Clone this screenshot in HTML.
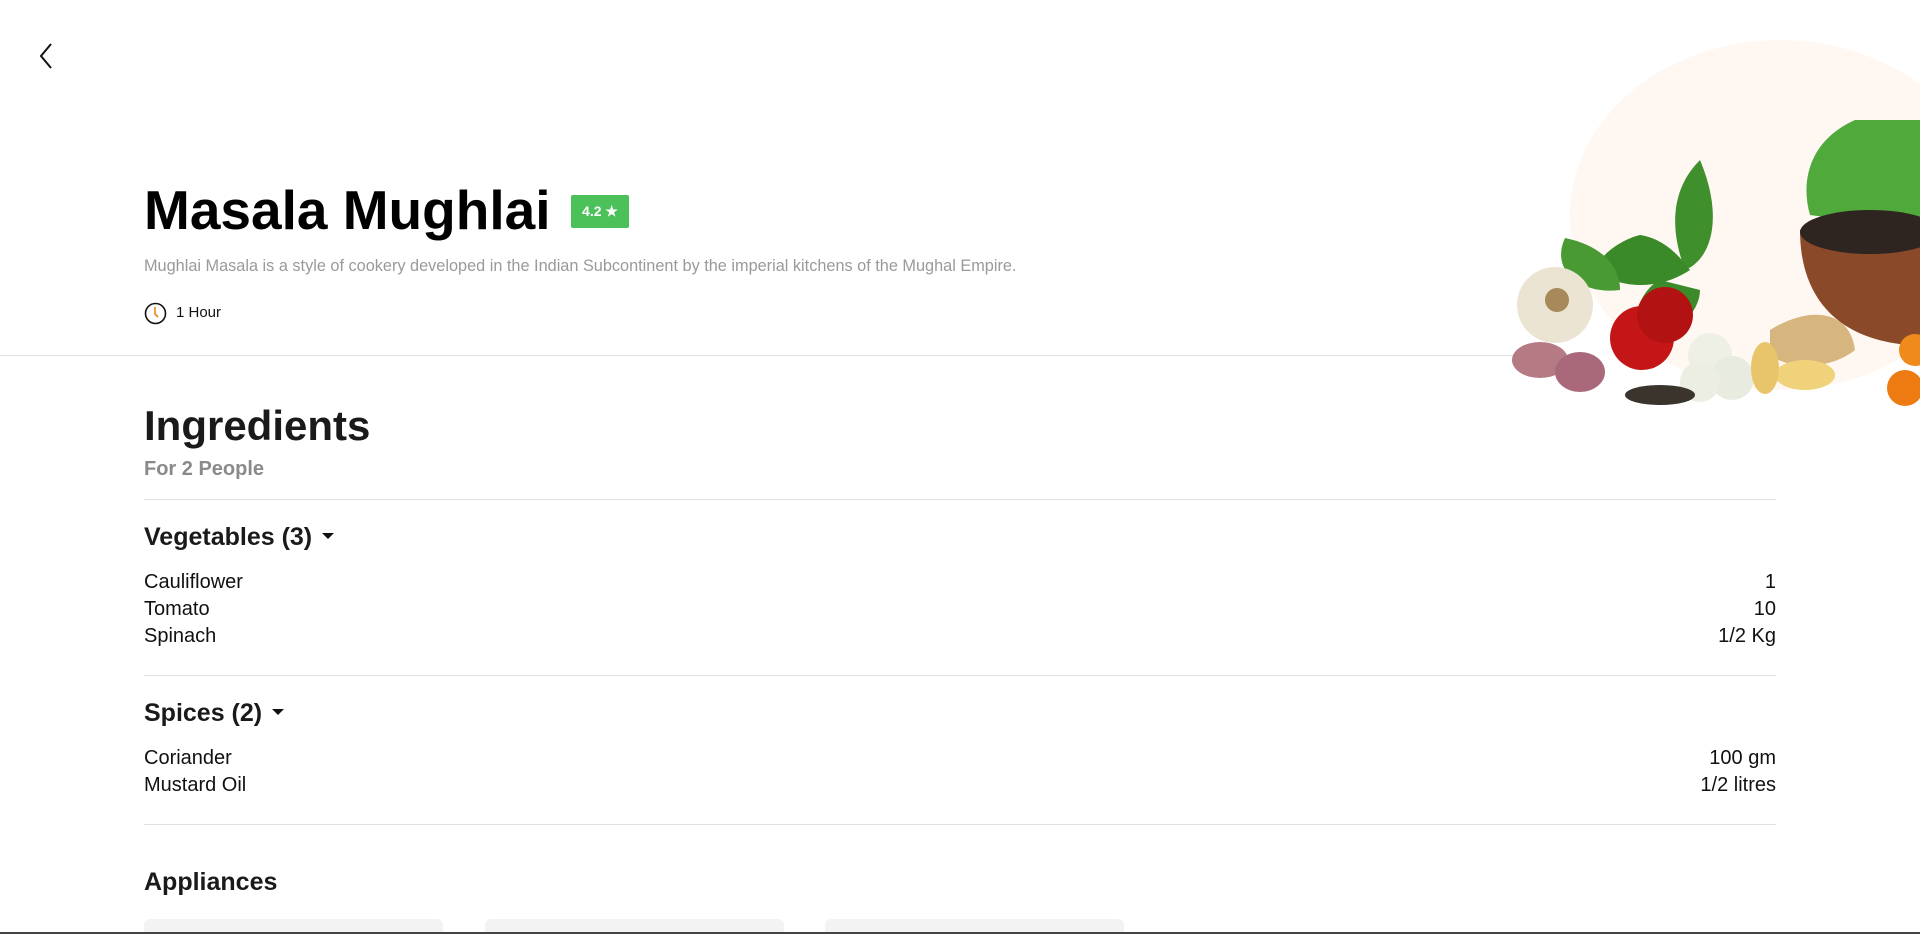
<!DOCTYPE html>
<html><head><meta charset="utf-8"><style>
*{margin:0;padding:0;box-sizing:border-box}
html,body{width:1920px;height:934px;overflow:hidden;background:#fff;font-family:"Liberation Sans",sans-serif;color:#111}
.abs{position:absolute}
h1{position:absolute;left:144px;top:178px;font-size:55px;font-weight:bold;color:#000}
.badge{left:571px;top:195px;width:58px;height:33px;background:#4cc15a;border-radius:2px;color:#fff;font-size:14px;font-weight:bold;text-align:center;line-height:33px}
.desc{left:144px;top:257px;font-size:16.3px;color:#9a9a9a}
.time{left:176px;top:304px;font-size:15px;color:#111}
.hr{height:1px;background:#e2e2e2}
.h2{left:144px;top:402px;font-size:42px;font-weight:bold;color:#1a1a1a}
.sub{left:144px;top:458px;font-size:20px;font-weight:bold;color:#8a8a8a}
.h3{left:144px;font-size:25px;font-weight:bold;color:#1a1a1a}
.row{left:144px;width:1632px;font-size:20px;display:flex;justify-content:space-between;color:#111}
.card{top:919px;width:299px;height:15px;background:#f3f3f3;border-radius:6px 6px 0 0}
.caret{display:inline-block;width:0;height:0;border-left:6px solid transparent;border-right:6px solid transparent;border-top:6px solid #111;vertical-align:middle;margin-left:10px;margin-top:-4px}
</style></head><body>
<svg class="abs" style="left:36px;top:42px" width="20" height="28" viewBox="0 0 20 28"><path d="M15 2 L5 14 L15 26" fill="none" stroke="#111" stroke-width="2"/></svg>

<div class="abs hr" style="left:0;top:355px;width:1540px"></div>
<div class="abs" style="left:1570px;top:40px;width:420px;height:350px;border-radius:50%;background:#fff7f1"></div>
<svg class="abs" style="left:1510px;top:120px" width="410" height="300" viewBox="0 0 410 300">
<path d="M345 0 C300 20 290 60 300 95 L410 110 L410 0 Z" fill="#4faa3b"/>
<path d="M190 40 C160 70 160 110 175 150 C200 140 215 100 190 40Z" fill="#3f8f2c"/>
<path d="M130 115 C110 120 90 135 85 150 C110 170 150 170 180 150 C165 130 150 118 130 115Z" fill="#3a8a2a"/>
<path d="M55 118 C40 150 70 175 110 170 C110 145 90 125 55 118Z" fill="#4a9a34"/>
<path d="M150 160 C130 170 120 200 130 220 C170 215 190 190 190 170 Z" fill="#3b8b2b"/>
<path d="M290 110 C290 180 330 220 400 225 L410 225 L410 110 Z" fill="#8a4a2a"/>
<ellipse cx="360" cy="112" rx="70" ry="22" fill="#2e2520"/>
<circle cx="45" cy="185" r="38" fill="#ece4d3"/>
<circle cx="47" cy="180" r="12" fill="#a8895a"/>
<ellipse cx="30" cy="240" rx="28" ry="18" fill="#b57a84"/>
<ellipse cx="70" cy="252" rx="25" ry="20" fill="#a9697a"/>
<circle cx="132" cy="218" r="32" fill="#c41616"/>
<circle cx="155" cy="195" r="28" fill="#b31212"/>
<circle cx="200" cy="235" r="22" fill="#eef0e6"/>
<circle cx="222" cy="258" r="22" fill="#e8ebdf"/>
<circle cx="190" cy="262" r="20" fill="#eceee3"/>
<path d="M260 210 C300 185 340 190 345 230 C320 250 280 250 260 235Z" fill="#d7b57f"/>
<ellipse cx="295" cy="255" rx="30" ry="15" fill="#f0d27a"/>
<ellipse cx="255" cy="248" rx="14" ry="26" fill="#e8c46a"/>
<circle cx="405" cy="230" r="16" fill="#f08a1a"/>
<circle cx="395" cy="268" r="18" fill="#ee7a12"/>
<ellipse cx="150" cy="275" rx="35" ry="10" fill="#3a342c"/>
</svg>

<h1>Masala Mughlai</h1>
<div class="abs badge">4.2 ★</div>
<div class="abs desc">Mughlai Masala is a style of cookery developed in the Indian Subcontinent by the imperial kitchens of the Mughal Empire.</div>
<svg class="abs" style="left:144px;top:302px" width="23" height="23" viewBox="0 0 23 23"><circle cx="11.5" cy="11.5" r="10" fill="none" stroke="#111" stroke-width="1.6"/><path d="M11 5 L11 12 L14 15" fill="none" stroke="#e58a1a" stroke-width="1.6"/></svg>
<div class="abs time">1 Hour</div>

<div class="abs h2">Ingredients</div>
<div class="abs sub">For 2 People</div>
<div class="abs hr" style="left:144px;top:499px;width:1632px"></div>
<div class="abs h3" style="top:523px">Vegetables (3)<span class="caret"></span></div>
<div class="abs row" style="top:571px"><span>Cauliflower</span><span>1</span></div>
<div class="abs row" style="top:598px"><span>Tomato</span><span>10</span></div>
<div class="abs row" style="top:625px"><span>Spinach</span><span>1/2 Kg</span></div>
<div class="abs hr" style="left:144px;top:675px;width:1632px"></div>
<div class="abs h3" style="top:699px">Spices (2)<span class="caret"></span></div>
<div class="abs row" style="top:747px"><span>Coriander</span><span>100 gm</span></div>
<div class="abs row" style="top:774px"><span>Mustard Oil</span><span>1/2 litres</span></div>
<div class="abs hr" style="left:144px;top:824px;width:1632px"></div>
<div class="abs h3" style="top:868px">Appliances</div>
<div class="abs card" style="left:144px"></div>
<div class="abs card" style="left:485px"></div>
<div class="abs card" style="left:825px"></div>
<div class="abs" style="left:0;top:932px;width:1920px;height:2px;background:#444"></div>
</body></html>
